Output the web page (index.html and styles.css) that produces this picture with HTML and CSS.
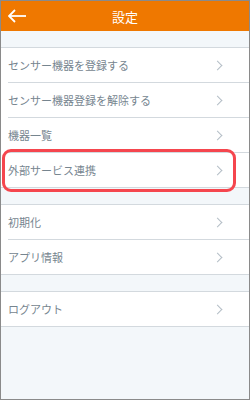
FILE: index.html
```html
<!DOCTYPE html>
<html lang="ja">
<head>
  <meta charset="UTF-8">
  <title>設定</title>
  <link rel="stylesheet" href="styles.css">
</head>
<body>

  <div class="screen">
    <div class="header">
      <svg class="back" width="18" height="14" viewBox="0 0 18 14">
        <polyline points="7,1 1,7 7,13" fill="none" stroke="#fff" stroke-width="1.8"/>
        <line x1="1" y1="7" x2="18" y2="7" stroke="#fff" stroke-width="1.8"/>
      </svg>
      <h1>設定</h1>
    </div>

    <div class="gap"></div>
    <div class="group">
      <div class="row"><span>センサー機器を登録する</span><i class="chev"></i></div>
      <div class="row"><span>センサー機器登録を解除する</span><i class="chev"></i></div>
      <div class="row"><span>機器一覧</span><i class="chev"></i></div>
      <div class="row"><span>外部サービス連携</span><i class="chev"></i></div>
    </div>

    <div class="gap"></div>
    <div class="group">
      <div class="row"><span>初期化</span><i class="chev"></i></div>
      <div class="row"><span>アプリ情報</span><i class="chev"></i></div>
    </div>

    <div class="gap"></div>
    <div class="group">
      <div class="row"><span>ログアウト</span><i class="chev"></i></div>
    </div>

    <div class="highlight"></div>
  </div>

</body>
</html>
```

FILE: styles.css
```css
body {
  margin: 0;
  font-family: "Noto Sans CJK JP", "Noto Sans", sans-serif;
}

.screen {
  position: relative;
  width: 248px;
  height: 398px;
  border: 1px solid #8a8a8a;
  background-color: #f3f7fa;
  overflow: hidden;
}

.header {
  height: 30px;
  background-color: #ef7800;
  display: flex;
  align-items: center;
  justify-content: center;
  position: relative;
}

.header h1 {
  margin: 0;
  font-size: 13px;
  font-weight: normal;
  color: #fff;
}

.back {
  position: absolute;
  left: 7px;
  top: 8px;
}

.gap {
  height: 16px;
}

.group {
  background-color: #fff;
  border-top: 1px solid #d3d9de;
  border-bottom: 1px solid #d3d9de;
}

.row {
  height: 34px;
  margin-left: 7px;
  display: flex;
  align-items: center;
  justify-content: space-between;
  font-size: 11px;
  color: #76858f;
}

.row + .row {
  border-top: 1px solid #d3d9de;
}

.chev {
  width: 6px;
  height: 6px;
  border-top: 1px solid #b4bec6;
  border-right: 1px solid #b4bec6;
  transform: rotate(45deg);
  margin-right: 28px;
}

.highlight {
  position: absolute;
  left: 1px;
  top: 148px;
  width: 228px;
  height: 37px;
  border: 3px solid #f5464e;
  border-radius: 9px;
}
```
